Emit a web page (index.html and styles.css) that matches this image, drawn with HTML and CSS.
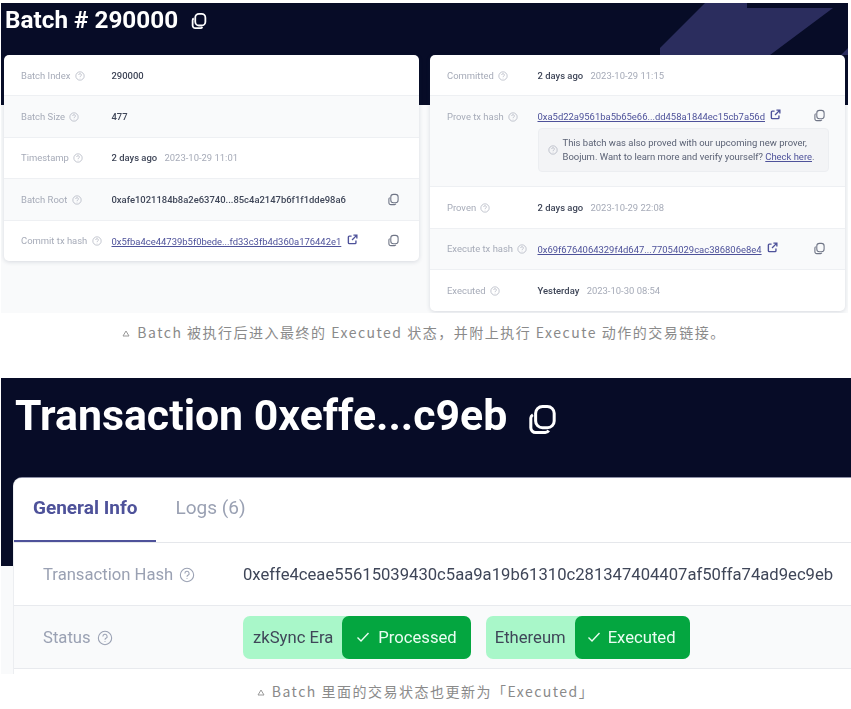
FILE: index.html
```html
<!DOCTYPE html>
<html lang="en">
<head>
  <meta charset="UTF-8">
  <meta name="viewport" content="width=device-width, initial-scale=1.0">
  <title>Batch status</title>
  <link rel="stylesheet" href="styles.css">
</head>
<body>
  <svg class="icon-defs" width="0" height="0">
    <symbol id="help" viewBox="0 0 24 24">
      <circle cx="12" cy="12" r="10" fill="none" stroke="currentColor" stroke-width="1.6"/>
      <path d="M8.800 9.600a3.200 3.200 0 1 1 4.600 2.900c-.9.500-1.400 1-1.400 2M12 16.400v1.200" fill="none" stroke="currentColor" stroke-width="1.6"/>
    </symbol>
    <symbol id="copy" viewBox="0 0 24 24">
      <path d="M5 8.500A3 3 0 0 0 3.500 11v7A3.500 3.500 0 0 0 7 21.500h7a3 3 0 0 0 2.500-1.500" fill="none" stroke="currentColor"/>
      <rect x="7" y="2.500" width="13.500" height="15.500" rx="5" fill="none" stroke="currentColor"/>
    </symbol>
    <symbol id="ext" viewBox="0 0 24 24">
      <path d="M10 4.500H5A2 2 0 0 0 3 6.500V19a2 2 0 0 0 2 2h12.500a2 2 0 0 0 2-2v-5M11 13 21 3M14 2.500h7.500V10" fill="none" stroke="currentColor" stroke-width="3"/>
    </symbol>
    <symbol id="tri" viewBox="0 0 8 7">
      <path d="M4 1 7 6H1Z" fill="none" stroke="currentColor" stroke-width="1"/>
    </symbol>
  </svg>

  <section class="shot shot-batch">
    <svg class="decor" width="847" height="102" viewBox="0 0 847 102">
      <path d="M659 45 704 0H746V5H832L769 52H659ZM840 52 847 45V52Z" fill="#2b2d5e"/>
    </svg>
    <h1 class="batch-title">Batch # 290000 <svg class="title-copy"><use href="#copy"/></svg></h1>
    <div class="cards">
      <div class="card">
        <div class="row">
          <div class="label">Batch Index <svg class="help"><use href="#help"/></svg></div>
          <div class="value">290000</div>
        </div>
        <div class="row">
          <div class="label">Batch Size <svg class="help"><use href="#help"/></svg></div>
          <div class="value">477</div>
        </div>
        <div class="row">
          <div class="label">Timestamp <svg class="help"><use href="#help"/></svg></div>
          <div class="value">2 days ago <span class="date">2023-10-29 11:01</span></div>
        </div>
        <div class="row">
          <div class="label">Batch Root <svg class="help"><use href="#help"/></svg></div>
          <div class="value">0xafe1021184b8a2e63740...85c4a2147b6f1f1dde98a6</div>
          <svg class="copy"><use href="#copy"/></svg>
        </div>
        <div class="row">
          <div class="label">Commit tx hash <svg class="help"><use href="#help"/></svg></div>
          <div class="value"><a href="#">0x5fba4ce44739b5f0bede...fd33c3fb4d360a176442e1</a> <svg class="ext"><use href="#ext"/></svg></div>
          <svg class="copy"><use href="#copy"/></svg>
        </div>
      </div>

      <div class="card">
        <div class="row">
          <div class="label">Committed <svg class="help"><use href="#help"/></svg></div>
          <div class="value">2 days ago <span class="date">2023-10-29 11:15</span></div>
        </div>
        <div class="row row-tall">
          <div class="label">Prove tx hash <svg class="help"><use href="#help"/></svg></div>
          <div class="value">
            <a href="#">0xa5d22a9561ba5b65e66...dd458a1844ec15cb7a56d</a> <svg class="ext"><use href="#ext"/></svg>
          </div>
          <svg class="copy"><use href="#copy"/></svg>
          <div class="note">
            <svg class="help"><use href="#help"/></svg>
            <p>This batch was also proved with our upcoming new prover, Boojum. Want to learn more and verify yourself? <a href="#">Check here</a>.</p>
          </div>
        </div>
        <div class="row">
          <div class="label">Proven <svg class="help"><use href="#help"/></svg></div>
          <div class="value">2 days ago <span class="date">2023-10-29 22:08</span></div>
        </div>
        <div class="row">
          <div class="label">Execute tx hash <svg class="help"><use href="#help"/></svg></div>
          <div class="value"><a href="#">0x69f6764064329f4d647...77054029cac386806e8e4</a> <svg class="ext"><use href="#ext"/></svg></div>
          <svg class="copy"><use href="#copy"/></svg>
        </div>
        <div class="row">
          <div class="label">Executed <svg class="help"><use href="#help"/></svg></div>
          <div class="value">Yesterday <span class="date">2023-10-30 08:54</span></div>
        </div>
      </div>
    </div>
  </section>
  <p class="caption caption-first"><svg class="tri"><use href="#tri"/></svg>Batch 被执行后进入最终的 Executed 状态，并附上执行 Execute 动作的交易链接。</p>

  <section class="shot shot-tx">
    <h1 class="tx-title">Transaction 0xeffe...c9eb <svg class="tx-copy"><use href="#copy"/></svg></h1>
    <div class="tx-card">
      <div class="tabs">
        <div class="tab tab-active">General Info</div>
        <div class="tab">Logs (6)</div>
      </div>
      <div class="tx-row">
        <div class="tx-label">Transaction Hash <svg class="tx-help"><use href="#help"/></svg></div>
        <div class="tx-value">0xeffe4ceae55615039430c5aa9a19b61310c281347404407af50ffa74ad9ec9eb</div>
      </div>
      <div class="tx-row tx-row-status">
        <div class="tx-label">Status <svg class="tx-help"><use href="#help"/></svg></div>
        <div class="badges">
          <div class="badge">
            <span class="badge-name">zkSync Era</span>
            <span class="badge-state"><svg class="check" viewBox="0 0 16 16"><path d="M2.500 8.500 6 12l7.500-8" fill="none" stroke="currentColor" stroke-width="1.400"/></svg>Processed</span>
          </div>
          <div class="badge badge-eth">
            <span class="badge-name">Ethereum</span>
            <span class="badge-state"><svg class="check" viewBox="0 0 16 16"><path d="M2.500 8.500 6 12l7.500-8" fill="none" stroke="currentColor" stroke-width="1.400"/></svg>Executed</span>
          </div>
        </div>
      </div>
    </div>
  </section>
  <p class="caption caption-last"><svg class="tri"><use href="#tri"/></svg>Batch 里面的交易状态也更新为「Executed」</p>
</body>
</html>
```

FILE: styles.css
```css
html, body {
  margin: 0;
  background: #fff;
  overflow: hidden;
}
body {
  width: 851px;
  height: 709px;
  font-family: Roboto, "Noto Sans CJK SC", sans-serif;
}
.icon-defs {
  position: absolute;
}
svg {
  display: inline-block;
  flex-shrink: 0;
}
.shot {
  position: relative;
  overflow: hidden;
  box-sizing: border-box;
  filter: blur(0.35px);
}

/* batch screenshot */
.shot-batch {
  width: 847px;
  height: 310px;
  margin: 3px 0 0 1px;
  background: linear-gradient(#070c27 102px, #f9fafb 102px);
  filter: blur(0.45px);
}
.decor {
  position: absolute;
  top: 0;
  left: 0;
}
.batch-title {
  position: relative;
  margin: 0;
  height: 52px;
  padding-left: 4px;
  font-size: 24.300px;
  line-height: 34px;
  font-weight: 700;
  color: #fff;
}
.title-copy {
  width: 18px;
  height: 18px;
  margin-left: 6px;
  stroke-width: 2.400px;
  vertical-align: -2px;
}
.cards {
  position: relative;
  display: flex;
  gap: 11px;
  align-items: flex-start;
  padding-left: 3px;
}
.card {
  width: 415px;
  border-radius: 5px;
  background: #fff;
  overflow: hidden;
  box-shadow: 0 1px 4px rgba(40, 50, 80, 0.16);
}
.row {
  display: grid;
  grid-template-columns: 90.500px 1fr 16px;
  grid-template-rows: 40.400px;
  align-items: center;
  padding: 0 16px 0 17px;
  box-sizing: border-box;
  border-bottom: 1px solid #eef0f3;
  font-size: 9.450px;
}
.row:last-child {
  border-bottom: 0;
}
.row:nth-child(even) {
  background: #f9fafb;
}
.row-tall {
  grid-template-rows: 41px 49px;
  align-items: start;
}
.row-tall .label, .row-tall .value, .row-tall .copy {
  align-self: center;
}
.row-tall .value, .row-tall .copy {
  margin-top: -2px;
}
.label {
  color: #a6abb8;
  white-space: nowrap;
}
.help {
  width: 10px;
  height: 10px;
  margin-left: 2px;
  color: #a6abb8;
  vertical-align: -2px;
}
.value {
  color: #3f4658;
  font-weight: 500;
  white-space: nowrap;
}
.value a {
  color: #4e529a;
  font-weight: 400;
}
.date {
  margin-left: 5px;
  color: #a6abb8;
  font-weight: 400;
}
.ext {
  width: 11px;
  height: 11px;
  margin-left: 3px;
  color: #4e529a;
  vertical-align: 0;
}
.copy {
  width: 13px;
  height: 13px;
  color: #6f7586;
  stroke-width: 2px;
}
.note {
  grid-column: 2 / 4;
  grid-row: 2;
  margin-top: -9.400px;
  height: 44px;
  display: flex;
  align-items: center;
  box-sizing: border-box;
  padding: 0 8px 0 9px;
  border: 1px solid #eceef1;
  border-radius: 4px;
  background: #f3f4f6;
}
.note .help {
  margin: 0 5px 0 0;
}
.note p {
  margin: 0;
  color: #5a6174;
  font-size: 9.450px;
  line-height: 14px;
}
.note a {
  color: #4e529a;
}

/* captions */
.caption {
  margin: 0;
  text-align: center;
  font-family: "Noto Sans CJK SC", sans-serif;
  font-size: 14px;
  line-height: 24px;
  letter-spacing: 1.500px;
  color: #8a8a8a;
}
.caption-first {
  margin-top: 7px;
  padding-right: 3px;
  margin-bottom: 34px;
}
.caption-last {
  margin-top: 5px;
}
.tri {
  width: 8px;
  height: 7px;
  margin-right: 7px;
  color: #999;
  vertical-align: 1px;
}

/* transaction screenshot */
.shot-tx {
  width: 850px;
  height: 296px;
  margin-left: 1px;
  background: linear-gradient(#070c27 188px, #f9fafb 188px);
}
.tx-title {
  margin: 0;
  height: 100px;
  padding-left: 14px;
  font-size: 42.800px;
  line-height: 75px;
  font-weight: 700;
  color: #fff;
}
.tx-copy {
  width: 33px;
  height: 33px;
  margin-left: 8px;
  stroke-width: 2.200px;
  vertical-align: -6px;
}
.tx-card {
  margin-left: 13px;
  border-radius: 8px 0 0 0;
  background: #fff;
  height: 196px;
  box-shadow: -1px 0 #eceef1, 0 -1px #8d90a6;
}
.tabs {
  display: flex;
  height: 65px;
  box-sizing: border-box;
  border-bottom: 1px solid #e5e7eb;
  font-size: 19px;
  line-height: 60px;
  color: #9aa1b3;
}
.tab {
  padding: 0 19px;
}
.tab-active {
  height: 64px;
  box-sizing: border-box;
  border-bottom: 2.500px solid #4e529a;
  font-weight: 700;
  color: #4e529a;
}
.tx-row {
  display: grid;
  grid-template-columns: 200px 1fr;
  align-items: center;
  height: 63px;
  padding-left: 29px;
  box-sizing: border-box;
  border-bottom: 1px solid #e8eaee;
  font-size: 16.650px;
}
.tx-row-status {
  background: #f9fafb;
}
.tx-label {
  color: #9aa1b3;
  white-space: nowrap;
}
.tx-help {
  width: 16px;
  height: 16px;
  margin-left: 2px;
  color: #9aa1b3;
  vertical-align: -3px;
}
.tx-value {
  color: #3f4658;
  white-space: nowrap;
}
.badges {
  display: flex;
  gap: 15px;
}
.badge {
  display: flex;
  height: 43px;
  align-items: center;
  border-radius: 7px;
  background: #a9f7c9;
  color: #3f4658;
}
.badge-name {
  padding: 0 9px 0 10px;
}
.badge-state {
  display: flex;
  align-items: center;
  height: 100%;
  gap: 7px;
  padding: 0 14px 0 13px;
  border-radius: 7px;
  background: #04a640;
  color: #e9fdf1;
}
.badge-eth .badge-name {
  padding: 0 9px;
}
.badge-eth .badge-state {
  gap: 6px;
  padding: 0 14px 0 11px;
}
.check {
  width: 16px;
  height: 16px;
}
```
